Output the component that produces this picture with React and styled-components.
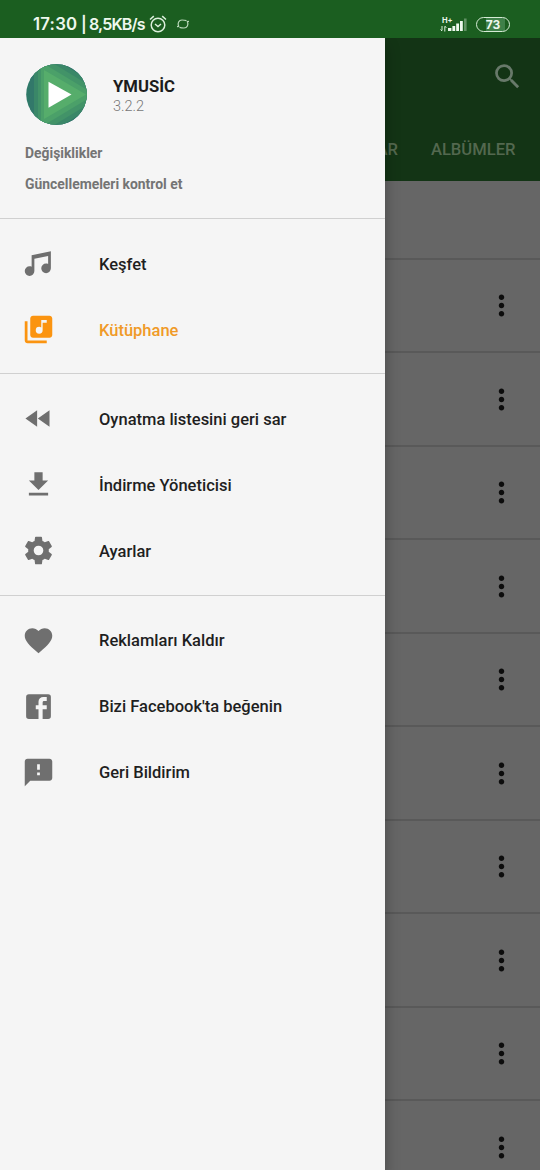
import React from "react";
import styled, { createGlobalStyle } from "styled-components";
import { MdSearch, MdMoreVert, MdFavorite, MdFastRewind } from "react-icons/md";

const icons = {
  music:
    "M21 3v12.5a3.5 3.5 0 1 1-3.5-3.5c.54 0 1.05.12 1.5.34V6.47L9 8.6v8.9A3.5 3.5 0 1 1 5.5 14c.54 0 1.05.12 1.5.34V6l14-3z",
  library:
    "M20 2H8c-1.1 0-2 .9-2 2v12c0 1.1.9 2 2 2h12c1.1 0 2-.9 2-2V4c0-1.1-.9-2-2-2zm-2 5h-3v5.5a2.5 2.5 0 1 1-2.5-2.5c.57 0 1.08.19 1.5.51V5h4v2zM4 6H2v14c0 1.1.9 2 2 2h14v-2H4V6z",
  download: "M19 9h-4V3H9v6H5l7 7 7-7zM5 18v2h14v-2H5z",
  settings:
    "M12 15.5A3.5 3.5 0 0 1 8.5 12 3.5 3.5 0 0 1 12 8.5a3.5 3.5 0 0 1 3.5 3.5 3.5 3.5 0 0 1-3.5 3.5m7.43-2.53c.04-.32.07-.64.07-.97s-.03-.66-.07-1l2.11-1.63c.19-.15.24-.42.12-.64l-2-3.46c-.12-.22-.39-.31-.61-.22l-2.49 1c-.52-.39-1.06-.73-1.69-.98l-.37-2.65A.506.506 0 0 0 14 2h-4c-.25 0-.46.18-.5.42l-.37 2.65c-.63.25-1.17.59-1.69.98l-2.49-1c-.22-.09-.49 0-.61.22l-2 3.46c-.13.22-.07.49.12.64L4.57 11c-.04.34-.07.67-.07 1s.03.65.07.97l-2.11 1.66c-.19.15-.25.42-.12.64l2 3.46c.12.22.39.3.61.22l2.49-1.01c.52.4 1.06.74 1.69.99l.37 2.65c.04.24.25.42.5.42h4c.25 0 .46-.18.5-.42l.37-2.65c.63-.26 1.17-.59 1.69-.99l2.49 1.01c.22.08.49 0 .61-.22l2-3.46c.12-.22.07-.49-.12-.64l-2.11-1.66z",
  facebook:
    "M5 3h14a2 2 0 0 1 2 2v14a2 2 0 0 1-2 2H5a2 2 0 0 1-2-2V5a2 2 0 0 1 2-2m13 2h-2.5A3.5 3.5 0 0 0 12 8.5V11h-2v3h2v7h3v-7h3v-3h-3V9a1 1 0 0 1 1-1h2V5z",
  feedback:
    "M20 2H4c-1.1 0-1.99.9-1.99 2L2 22l4-4h14c1.1 0 2-.9 2-2V4c0-1.1-.9-2-2-2zm-7 12h-2v-2h2v2zm0-4h-2V6h2v4z",
};

const groups = [
  [
    { icon: "music", label: "Keşfet" },
    { icon: "library", label: "Kütüphane", active: true },
  ],
  [
    { Icon: MdFastRewind, label: "Oynatma listesini geri sar" },
    { icon: "download", label: "İndirme Yöneticisi" },
    { icon: "settings", label: "Ayarlar" },
  ],
  [
    { Icon: MdFavorite, label: "Reklamları Kaldır" },
    { icon: "facebook", label: "Bizi Facebook'ta beğenin" },
    { icon: "feedback", label: "Geri Bildirim" },
  ],
];

const songs = [1, 2, 3, 4, 5, 6, 7, 8, 9, 10];

function MenuIcon({ name, Icon }) {
  if (Icon) {
    return <Icon size={33} />;
  }
  return (
    <svg width="33" height="33" viewBox="0 0 24 24" fill="currentColor">
      <path fillRule="evenodd" d={icons[name]} />
    </svg>
  );
}

function Logo() {
  return (
    <svg width="62" height="62" viewBox="0 0 62 62">
      <defs>
        <clipPath id="disc">
          <circle cx="31.5" cy="31.5" r="30.3" />
        </clipPath>
        <linearGradient id="sea" x1="0" y1="0" x2="1" y2="0">
          <stop offset="0" stopColor="#2f7a68" />
          <stop offset="1" stopColor="#2a6470" />
        </linearGradient>
      </defs>
      <g clipPath="url(#disc)">
        <rect width="62" height="62" fill="url(#sea)" />
        <path d="M5 -24L96 31.5L5 87z" fill="#32786a" />
        <path d="M9 -17L87 31.5L9 80z" fill="#3a8768" />
        <path d="M13 -9L79 31.5L13 72z" fill="#429368" />
        <path d="M16 -1L70 31.5L16 64z" fill="#4ba069" />
        <path d="M19 7L61 31.5L19 56z" fill="#56ad6b" />
        <path d="M23.5 18.7L46.5 31.5L23.5 44.7z" fill="#fff" />
      </g>
    </svg>
  );
}

function StatusBar() {
  return (
    <Status>
      <Clock>17:30</Clock>
      <Speed>| 8,5KB/s</Speed>
      <svg width="18" height="19" viewBox="0 0 18 19" fill="none" stroke="#dcefdc">
        <circle cx="9" cy="10" r="6.8" strokeWidth="1.5" />
        <path d="M1 4.5L4.8 1.1M17 4.5L13.2 1.1" strokeWidth="1.5" />
        <path d="M6 9L9 11.5L12 9" strokeWidth="1.4" />
      </svg>
      <Sync width="14" height="12" viewBox="0 0 14 12" fill="none" stroke="#b9d8b9">
        <path d="M2.6 8.2Q1.6 6 2.6 4Q3.6 2 6 2Q8.5 2 10.5 2.6M1 8.6L3.2 8.4" strokeWidth="1.2" />
        <path d="M11.4 3.8Q12.4 6 11.4 8Q10.4 10 8 10Q5.5 10 3.5 9.4M13 3.4L10.8 3.6" strokeWidth="1.2" />
      </Sync>
      <Network>
        <span>H+</span>
        <svg width="9" height="7" viewBox="0 0 9 7" fill="none" stroke="#dcefdc" strokeWidth="1">
          <path d="M2 1V5.5M.5 4.5L2 6M4.8 6.5V1.5M4.8 1L6.3 2.8" />
        </svg>
      </Network>
      <svg width="21" height="15" viewBox="0 0 21 15">
        <g fill="#eef8ee">
          <rect x="0" y="11" width="3.4" height="3" />
          <rect x="4.4" y="9" width="2.8" height="5" />
          <rect x="8.2" y="6.5" width="2.8" height="7.5" />
          <rect x="12" y="4" width="2.8" height="10" />
        </g>
        <rect x="16" y="1.5" width="2.6" height="12.5" fill="#e4f3e4" opacity="0.35" />
      </svg>
      <Battery>73</Battery>
    </Status>
  );
}

export default function App() {
  return (
    <Screen>
      <GlobalStyle />
      <StatusBar />
      <Body>
        <Drawer>
          <Header>
            <Brand>
              <Logo />
              <div>
                <AppName>YMUSİC</AppName>
                <Version>3.2.2</Version>
              </div>
            </Brand>
            <HeaderLink>Değişiklikler</HeaderLink>
            <HeaderLink>Güncellemeleri kontrol et</HeaderLink>
          </Header>
          {groups.map((group, i) => (
            <Group key={i}>
              {group.map((el) => (
                <Item key={el.label} $active={el.active}>
                  <MenuIcon name={el.icon} Icon={el.Icon} />
                  <Label $active={el.active}>{el.label}</Label>
                </Item>
              ))}
            </Group>
          ))}
        </Drawer>
        <Library>
          <Toolbar>
            <SearchRow>
              <MdSearch size={33} />
            </SearchRow>
            <Tabs>
              <Tab>ŞARKILAR</Tab>
              <Tab>ALBÜMLER</Tab>
            </Tabs>
          </Toolbar>
          <ListHead />
          {songs.map((el) => (
            <Song key={el}>
              <MdMoreVert size={33} />
            </Song>
          ))}
        </Library>
      </Body>
    </Screen>
  );
}

const GlobalStyle = createGlobalStyle`
  body {
    margin: 0;
    font-family: Roboto, "Noto Sans", sans-serif;
  }
  * {
    box-sizing: border-box;
  }
  svg {
    flex-shrink: 0;
    display: block;
  }
`;

const Screen = styled.div`
  width: 540px;
  height: 1170px;
  display: flex;
  flex-direction: column;
  overflow: hidden;
`;

const Status = styled.div`
  height: 38px;
  flex-shrink: 0;
  display: flex;
  align-items: center;
  padding: 10px 30px 0 33px;
  background: #1b5e20;
  color: #eef8ee;
  font-family: Inter, "Noto Sans", sans-serif;
  font-weight: 600;
  white-space: nowrap;
`;

const Clock = styled.span`
  width: 48px;
  font-size: 16.8px;
  letter-spacing: 0.2px;
`;

const Speed = styled.span`
  width: 68px;
  font-size: 16px;
  letter-spacing: -0.85px;
`;

const Sync = styled.svg`
  margin-left: 9px;
`;

const Network = styled.div`
  margin-left: auto;
  width: 8px;
  display: flex;
  flex-direction: column;
  span {
    padding-left: 2px;
    font-size: 7.5px;
    line-height: 8px;
    font-weight: 700;
  }
`;

const Battery = styled.div`
  width: 34px;
  height: 15px;
  margin-left: 7px;
  border: 1.5px solid #d5ead5;
  border-radius: 8px;
  background: linear-gradient(90deg, #1b5e20 28%, #3f8049 28%, #3f8049 88%, #1b5e20 88%);
  font-size: 12px;
  font-weight: 700;
  line-height: 13px;
  text-align: center;
`;

const Body = styled.div`
  flex: 1;
  min-height: 0;
  display: flex;
`;

const Drawer = styled.nav`
  width: 385px;
  flex-shrink: 0;
  z-index: 1;
  background: #f5f5f5;
  box-shadow: 0 8px 14px rgba(0, 0, 0, 0.3);
  clip-path: inset(0 -20px 0 0);
`;

const Header = styled.div`
  height: 181px;
  padding: 25px 25px 0;
  border-bottom: 1px solid #d0d0d0;
`;

const Brand = styled.div`
  display: flex;
  gap: 26px;
  margin-bottom: 13px;
`;

const AppName = styled.div`
  margin-top: 13px;
  font-size: 16.7px;
  line-height: 21px;
  font-weight: 700;
  color: #1c1c1c;
`;

const Version = styled.div`
  font-size: 14.5px;
  line-height: 20px;
  font-weight: 300;
  color: #777;
`;

const HeaderLink = styled.div`
  height: 30.5px;
  line-height: 30.5px;
  font-size: 13.9px;
  font-weight: 700;
  color: #747474;
`;

const Group = styled.div`
  padding: 11.4px 0 11px;
  & + & {
    border-top: 1px solid #d0d0d0;
  }
`;

const Item = styled.div`
  height: 66px;
  display: flex;
  align-items: center;
  padding-left: 22px;
  color: ${(props) => (props.$active ? "#fb9410" : "#6f6f6f")};
`;

const Label = styled.span`
  margin: 1.5px 0 0 44px;
  font-size: 16.5px;
  font-weight: 500;
  color: ${(props) => (props.$active ? "#f09a28" : "#1f1f1f")};
`;

const Library = styled.main`
  flex: 1;
  min-width: 0;
  overflow: hidden;
  background: #666;
`;

const Toolbar = styled.div`
  height: 143px;
  background: #133415;
  color: #68796a;
`;

const SearchRow = styled.div`
  height: 77px;
  display: flex;
  justify-content: flex-end;
  align-items: center;
  padding-right: 16px;
`;

const Tabs = styled.div`
  height: 68px;
  display: flex;
  justify-content: flex-end;
  align-items: center;
  gap: 33px;
  padding-right: 24.5px;
`;

const Tab = styled.span`
  font-size: 16.6px;
  font-weight: 500;
  color: #53684f;
`;

const ListHead = styled.div`
  height: 78.5px;
  border-bottom: 2px solid #595959;
`;

const Song = styled.div`
  height: 93.5px;
  display: flex;
  justify-content: flex-end;
  align-items: center;
  padding: 1px 22px 0 0;
  border-bottom: 2px solid #595959;
  color: #0c0c0c;
`;
